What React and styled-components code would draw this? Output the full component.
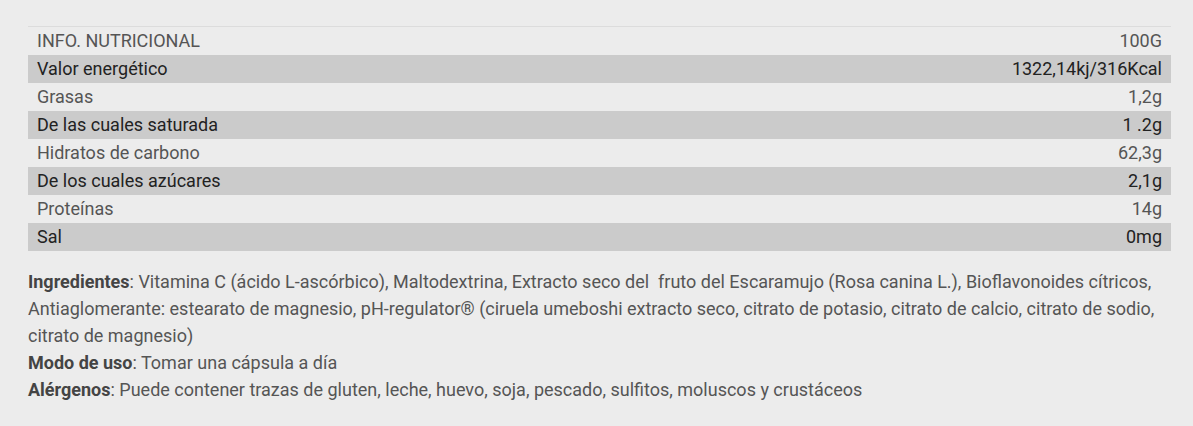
import React from "react";
import styled, { createGlobalStyle } from "styled-components";

const GlobalStyle = createGlobalStyle`
  body {
    margin: 0;
    background: #ececec;
    font-family: Roboto, "Liberation Sans", Arial, sans-serif;
  }
`;

const rows = [
  ["Valor energético", "1322,14kj/316Kcal"],
  ["Grasas", "1,2g"],
  ["De las cuales saturada", "1 .2g"],
  ["Hidratos de carbono", "62,3g"],
  ["De los cuales azúcares", "2,1g"],
  ["Proteínas", "14g"],
  ["Sal", "0mg"],
];

function App() {
  return (
    <SPage>
      <GlobalStyle />
      <STable>
        <thead>
          <SRow>
            <SCell>INFO. NUTRICIONAL</SCell>
            <SCell className="value">100G</SCell>
          </SRow>
        </thead>
        <tbody>
          {rows.map(([label, value], i) => (
            <SRow key={label} $shaded={i % 2 === 0}>
              <SCell>{label}</SCell>
              <SCell className="value">{value}</SCell>
            </SRow>
          ))}
        </tbody>
      </STable>
      <SInfo>
        <p>
          <b>Ingredientes</b>: Vitamina C (ácido L-ascórbico), Maltodextrina,
          Extracto seco del&nbsp; fruto del Escaramujo (Rosa canina L.),
          Bioflavonoides cítricos, Antiaglomerante: estearato de magnesio,
          pH-regulator® (ciruela umeboshi extracto seco, citrato de potasio,
          citrato de calcio, citrato de sodio, citrato de magnesio)
        </p>
        <p>
          <b>Modo de uso</b>: Tomar una cápsula a día
        </p>
        <p>
          <b>Alérgenos</b>: Puede contener trazas de gluten, leche, huevo, soja,
          pescado, sulfitos, moluscos y crustáceos
        </p>
      </SInfo>
    </SPage>
  );
}

export default App;

const SPage = styled.div`
  width: 1143px;
  padding: 26px 0 0 28px;
`;

const STable = styled.table`
  width: 100%;
  border-collapse: collapse;
  border-top: 1px solid #dcdcdc;
  font-size: 18px;
`;

const SRow = styled.tr`
  height: 28px;
  background: ${(props) => (props.$shaded ? "#cbcbcb" : "transparent")};
  color: ${(props) => (props.$shaded ? "#222" : "#555")};
`;

const SCell = styled.td`
  padding: 0 9px;
  line-height: 28px;
  &.value {
    text-align: right;
  }
`;

const SInfo = styled.div`
  margin-top: 17px;
  font-size: 18px;
  line-height: 27px;
  color: #555;
  & p {
    margin: 0;
  }
  & b {
    font-weight: 700;
    color: #444;
  }
`;
